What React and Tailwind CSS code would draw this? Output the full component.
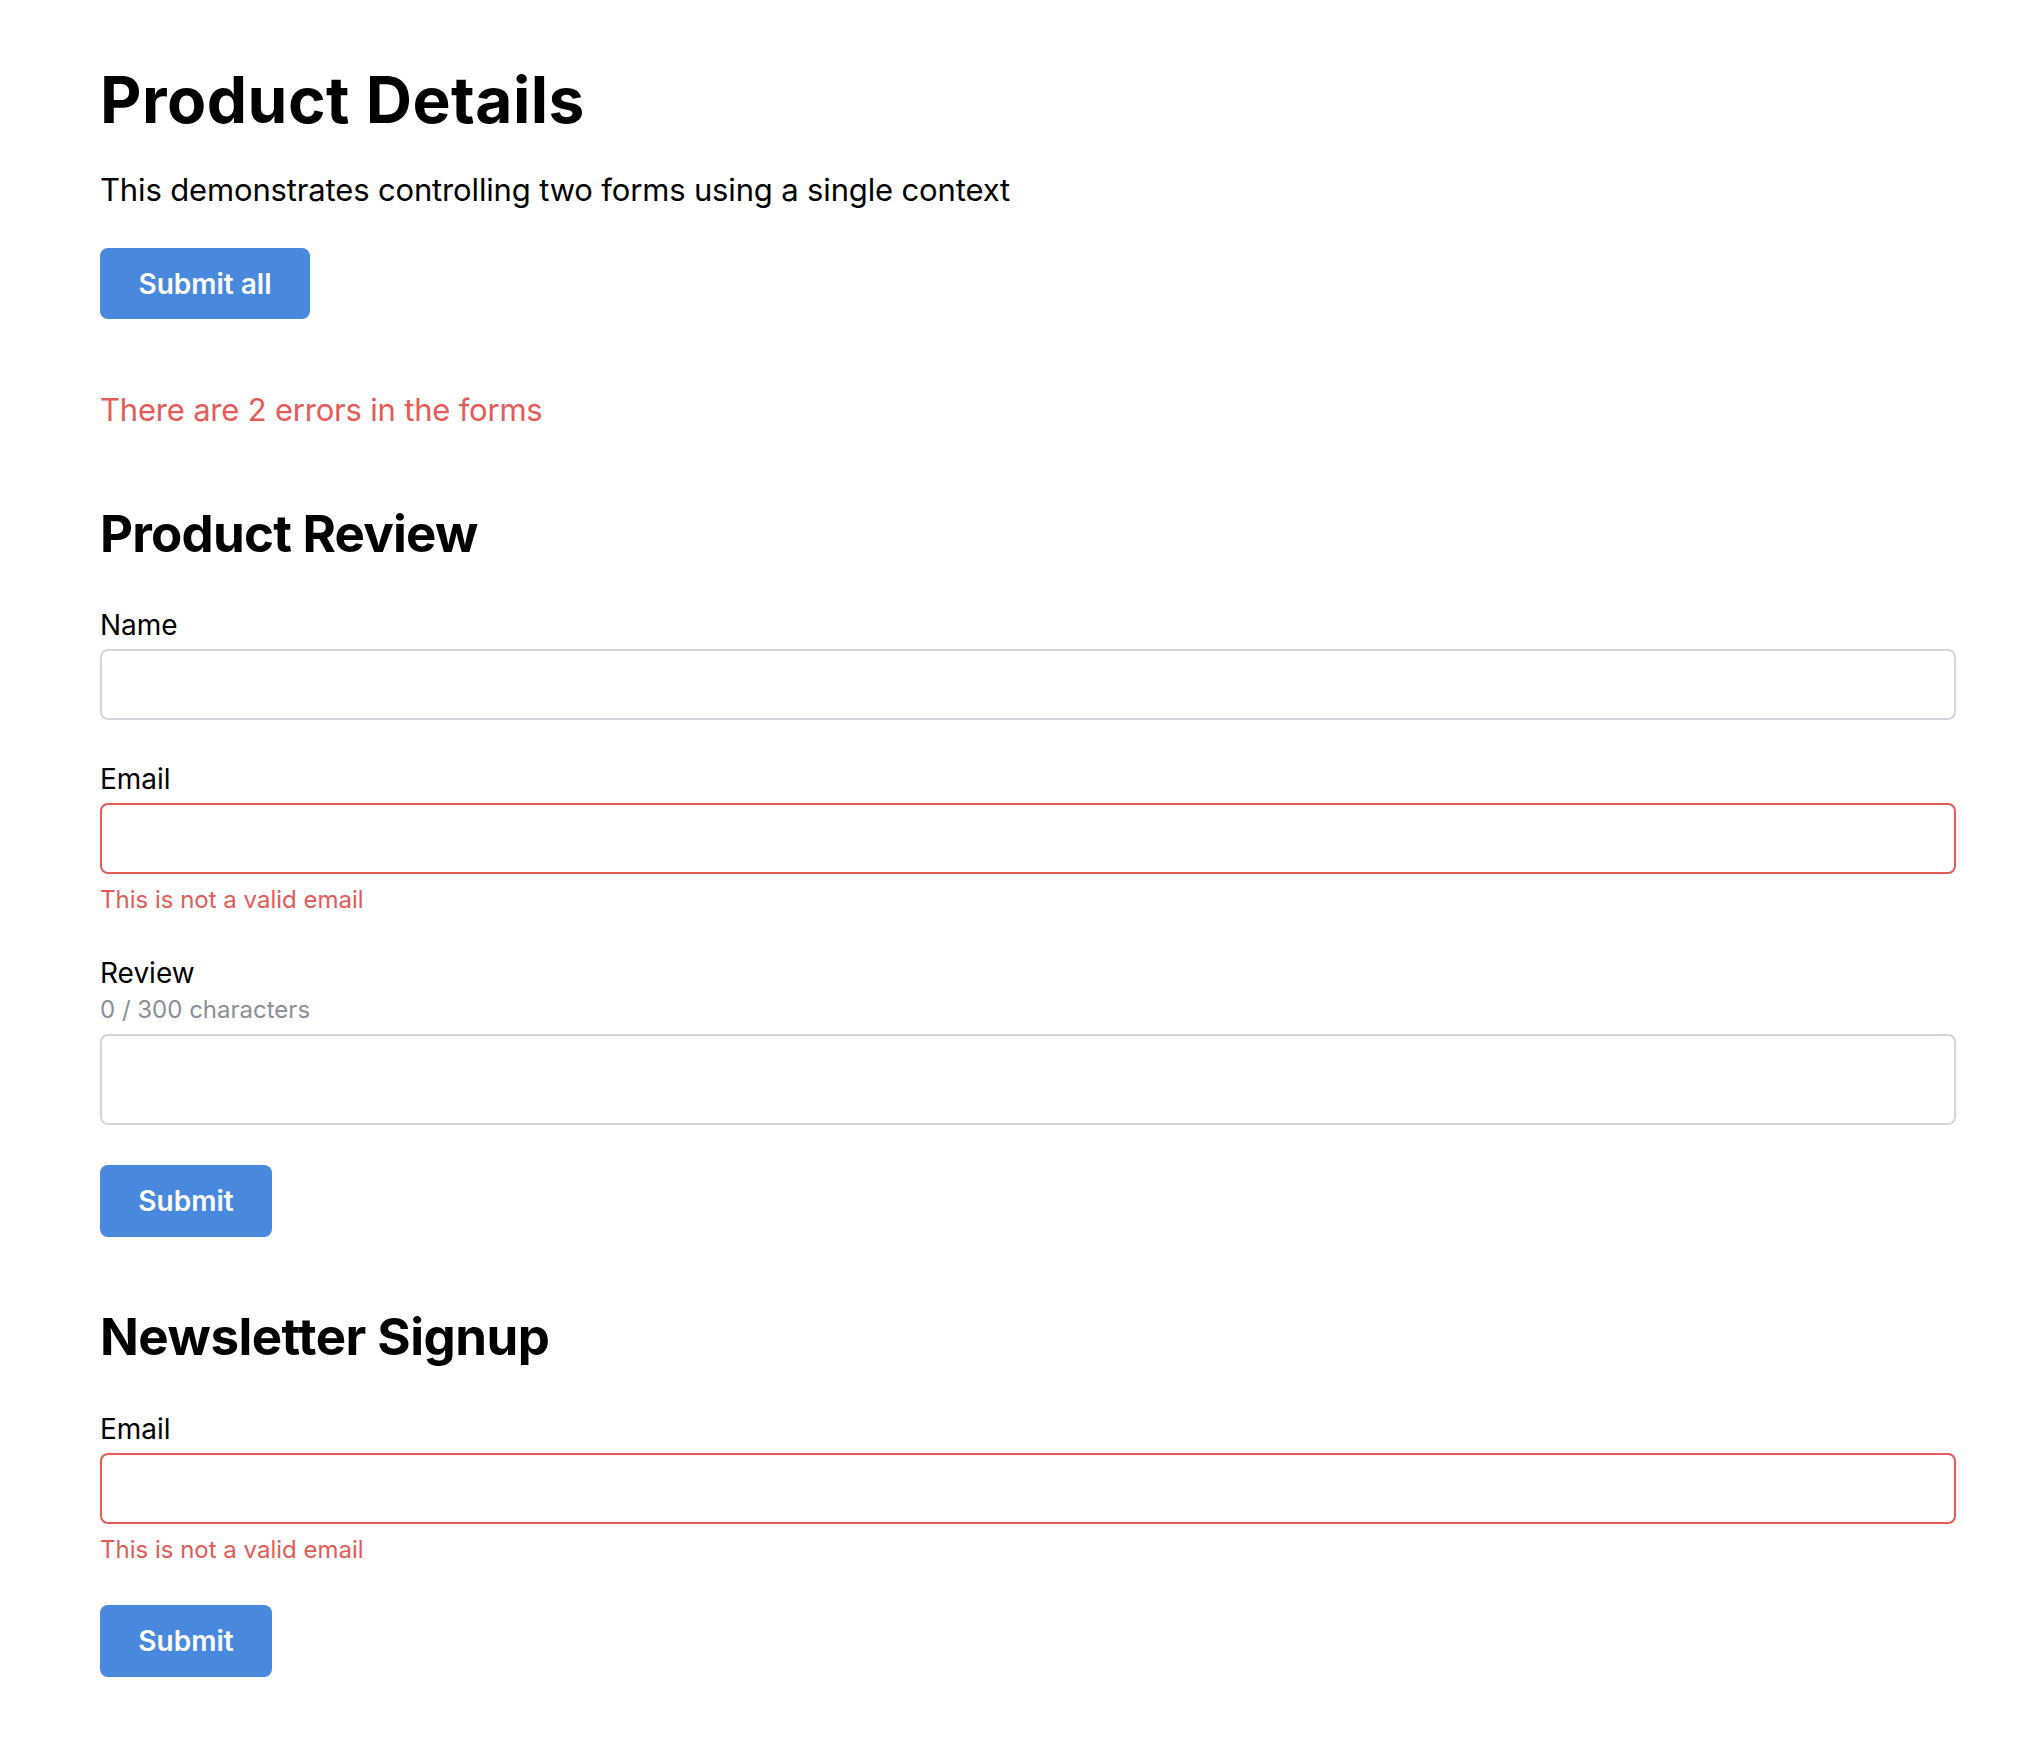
import React from "react";

const font = { fontFamily: "Inter, 'Noto Sans', 'Liberation Sans', sans-serif" };

function Label({ children, className = "" }) {
  return (
    <div className={"text-[28px] leading-[28px] font-normal text-black " + className}>
      {children}
    </div>
  );
}

function ErrorText({ children, className = "" }) {
  return (
    <div className={"text-[24px] leading-[24px] text-[#e55b57] " + className}>{children}</div>
  );
}

function Button({ children, className = "" }) {
  return (
    <button
      type="button"
      className={
        "h-[71px] rounded-[8px] bg-[#4889dd] text-white text-[28px] font-semibold flex items-center justify-center " +
        className
      }
    >
      {children}
    </button>
  );
}

export default function App() {
  return (
    <div className="min-h-[1756px] bg-white" style={font}>
      <div className="pl-[100px] pr-[80px] pt-[68px] pb-[80px] flex flex-col text-black">
        <h1 className="text-[64px] leading-[64px] font-bold tracking-[0.5px]">Product Details</h1>
        <p className="mt-[42px] text-[31px] leading-[32px] tracking-[-0.15px]">
          This demonstrates controlling two forms using a single context
        </p>
        <Button className="mt-[42px] w-[210px]">Submit all</Button>
        <p className="mt-[75px] text-[31px] leading-[32px] tracking-[-0.2px] text-[#e55b57]">
          There are 2 errors in the forms
        </p>

        <h2 className="mt-[82px] text-[51px] leading-[52px] font-bold tracking-[-0.015em]">
          Product Review
        </h2>
        <Label className="mt-[51px]">Name</Label>
        <input className="mt-[10px] h-[71px] w-full rounded-[8px] border-2 border-[#d2d6dc] px-4 outline-none" />
        <Label className="mt-[45px]">Email</Label>
        <input className="mt-[10px] h-[71px] w-full rounded-[8px] border-2 border-[#e55b57] px-4 outline-none" />
        <ErrorText className="mt-[14px]">This is not a valid email</ErrorText>
        <Label className="mt-[47px]">Review</Label>
        <div className="mt-[11px] text-[24px] leading-[24px] text-[#8a8f98]">0 / 300 characters</div>
        <textarea className="mt-[12px] h-[91px] w-full rounded-[8px] border-2 border-[#d2d6dc] px-4 outline-none resize-none block" />
        <Button className="mt-[40px] w-[172px] h-[72px]">Submit</Button>

        <h2 className="mt-[74px] text-[51px] leading-[52px] font-bold tracking-[-0.01em]">
          Newsletter Signup
        </h2>
        <Label className="mt-[52px]">Email</Label>
        <input className="mt-[10px] h-[71px] w-full rounded-[8px] border-2 border-[#e55b57] px-4 outline-none" />
        <ErrorText className="mt-[14px]">This is not a valid email</ErrorText>
        <Button className="mt-[43px] w-[172px] h-[72px]">Submit</Button>
      </div>
    </div>
  );
}
